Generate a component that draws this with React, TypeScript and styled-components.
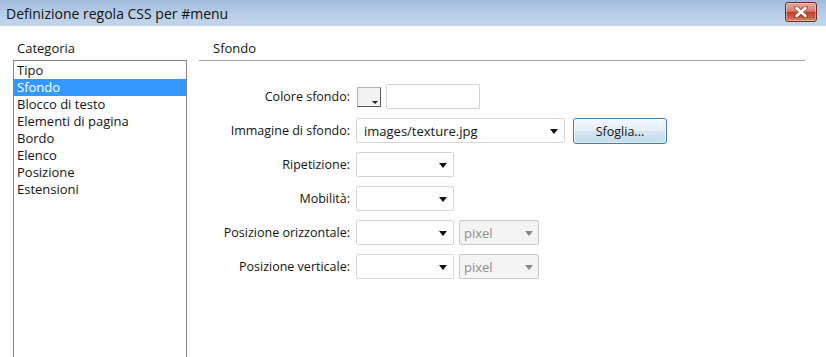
import React from 'react';
import styled, { createGlobalStyle } from 'styled-components';

const GlobalStyle = createGlobalStyle`
  html, body {
    margin: 0;
    padding: 0;
    background: #fff;
  }
  body {
    font-family: "Open Sans", "Noto Sans", sans-serif;
    font-size: 12px;
    color: #141414;
  }
`;

const categories = [
  'Tipo',
  'Sfondo',
  'Blocco di testo',
  'Elementi di pagina',
  'Bordo',
  'Elenco',
  'Posizione',
  'Estensioni',
];

const Window = styled.div`
  width: 826px;
  height: 357px;
  overflow: hidden;
  display: flex;
  flex-direction: column;
  background: #fff;
`;

const TitleBar = styled.div`
  height: 26px;
  flex: none;
  display: flex;
  align-items: center;
  justify-content: space-between;
  padding: 0 9px 0 6px;
  background: linear-gradient(#a1badb, #b9cfe8 60%, #c2d6ec);
  font-size: 14px;
  color: #111;
`;

const CloseButton = styled.div`
  width: 30px;
  height: 18px;
  margin-top: -2px;
  border: 1px solid #6f2a21;
  border-radius: 3px;
  display: flex;
  align-items: center;
  justify-content: center;
  background: linear-gradient(#e8a999, #d7806d 45%, #c4422c 50%, #cf5b43 80%, #e08a74);
  box-shadow: inset 0 0 0 1px rgba(255, 255, 255, 0.35);
`;

const Body = styled.div`
  flex: 1;
  display: flex;
  padding-left: 13px;
  min-height: 0;
`;

const Sidebar = styled.div`
  width: 174px;
  display: flex;
  flex-direction: column;
`;

const SectionLabel = styled.div<{ $indent: number }>`
  height: 34px;
  box-sizing: border-box;
  padding: 13px 0 0 ${(p) => p.$indent}px;
  line-height: 18px;
  font-size: 13px;
`;

const ListBox = styled.div`
  flex: 1;
  border: 1px solid #828790;
  border-bottom: none;
  padding-top: 1px;
`;

const ListItem = styled.div<{ $selected?: boolean }>`
  height: 17px;
  line-height: 17px;
  padding-left: 3px;
  font-size: 13px;
  background: ${(p) => (p.$selected ? '#3399ff' : 'transparent')};
  color: ${(p) => (p.$selected ? '#fff' : '#141414')};
`;

const Main = styled.div`
  width: 606px;
  margin-left: 12px;
  display: flex;
  flex-direction: column;
`;

const Header = styled(SectionLabel)`
  height: 35px;
  border-bottom: 1px solid #a0a0a0;
`;

const Form = styled.div`
  display: grid;
  grid-template-columns: 151px auto;
  column-gap: 6px;
  row-gap: 9px;
  grid-auto-rows: 25px;
  padding-top: 23px;
`;

const Label = styled.div`
  text-align: right;
  align-self: center;
  font-size: 12.5px;
  white-space: nowrap;
`;

const Controls = styled.div`
  display: flex;
  align-items: center;
`;

const Swatch = styled.div`
  position: relative;
  width: 22px;
  height: 18px;
  margin-left: 1px;
  border: 1px solid #b4b4b4;
  border-right-color: #5a5a5a;
  border-bottom-color: #5a5a5a;
  background: #f2f2f2;
  &::after {
    content: '';
    position: absolute;
    right: 2px;
    bottom: 2px;
    border-left: 3px solid transparent;
    border-right: 3px solid transparent;
    border-top: 3px solid #222;
  }
`;

const TextInput = styled.div`
  width: 92px;
  height: 23px;
  margin-left: 5px;
  border: 1px solid #d3d3d3;
  border-radius: 2px;
  background: #fff;
`;

const SelectBox = styled.div<{ $width: number; $disabled?: boolean; $gap?: number }>`
  position: relative;
  box-sizing: border-box;
  width: ${(p) => p.$width}px;
  height: 25px;
  margin-left: ${(p) => p.$gap ?? 0}px;
  padding-left: ${(p) => (p.$disabled ? 4 : 7)}px;
  display: flex;
  align-items: center;
  border: 1px solid ${(p) => (p.$disabled ? '#c9c9c9' : '#d6d6d6')};
  border-radius: 2px;
  background: ${(p) => (p.$disabled ? '#f4f4f4' : '#fff')};
  color: ${(p) => (p.$disabled ? '#8f8f8f' : '#141414')};
  font-size: 13px;
  &::after {
    content: '';
    position: absolute;
    right: ${(p) => (p.$disabled ? 5 : 6)}px;
    top: 10px;
    border-left: 4px solid transparent;
    border-right: 4px solid transparent;
    border-top: 5px solid ${(p) => (p.$disabled ? '#8a8a8a' : '#111')};
  }
`;

const Button = styled.div`
  box-sizing: border-box;
  width: 94px;
  height: 26px;
  margin-left: 8px;
  margin-top: 1px;
  display: flex;
  align-items: center;
  justify-content: center;
  border: 1px solid #3c7fb1;
  border-radius: 3px;
  background: linear-gradient(#f1f8fd, #e3eff8 50%, #d3e5f2 51%, #c6dcec);
  box-shadow: inset 0 0 0 1px rgba(255, 255, 255, 0.6);
  font-size: 12.5px;
`;

const CloseIcon = () => (
  <svg width="14" height="12" viewBox="0 0 14 12">
    <path
      d="M2 1.5 L7 5 L12 1.5 M2 10.5 L7 7 L12 10.5"
      stroke="#5a1a12"
      strokeWidth="4"
      fill="none"
      strokeLinecap="round"
      opacity="0.45"
    />
    <path d="M2.5 2 L11.5 10 M11.5 2 L2.5 10" stroke="#fff" strokeWidth="2.6" strokeLinecap="round" />
  </svg>
);

export default function App() {
  return (
    <Window>
      <GlobalStyle />
      <TitleBar>
        <span>Definizione regola CSS per #menu</span>
        <CloseButton>
          <CloseIcon />
        </CloseButton>
      </TitleBar>
      <Body>
        <Sidebar>
          <SectionLabel $indent={4}>Categoria</SectionLabel>
          <ListBox>
            {categories.map((c) => (
              <ListItem key={c} $selected={c === 'Sfondo'}>
                {c}
              </ListItem>
            ))}
          </ListBox>
        </Sidebar>
        <Main>
          <Header $indent={14}>Sfondo</Header>
          <Form>
            <Label>Colore sfondo:</Label>
            <Controls>
              <Swatch />
              <TextInput />
            </Controls>

            <Label>Immagine di sfondo:</Label>
            <Controls>
              <SelectBox $width={209}>images/texture.jpg</SelectBox>
              <Button>Sfoglia...</Button>
            </Controls>

            <Label>Ripetizione:</Label>
            <Controls>
              <SelectBox $width={98} />
            </Controls>

            <Label>Mobilità:</Label>
            <Controls>
              <SelectBox $width={98} />
            </Controls>

            <Label>Posizione orizzontale:</Label>
            <Controls>
              <SelectBox $width={98} />
              <SelectBox $width={80} $gap={5} $disabled>
                pixel
              </SelectBox>
            </Controls>

            <Label>Posizione verticale:</Label>
            <Controls>
              <SelectBox $width={98} />
              <SelectBox $width={80} $gap={5} $disabled>
                pixel
              </SelectBox>
            </Controls>
          </Form>
        </Main>
      </Body>
    </Window>
  );
}
